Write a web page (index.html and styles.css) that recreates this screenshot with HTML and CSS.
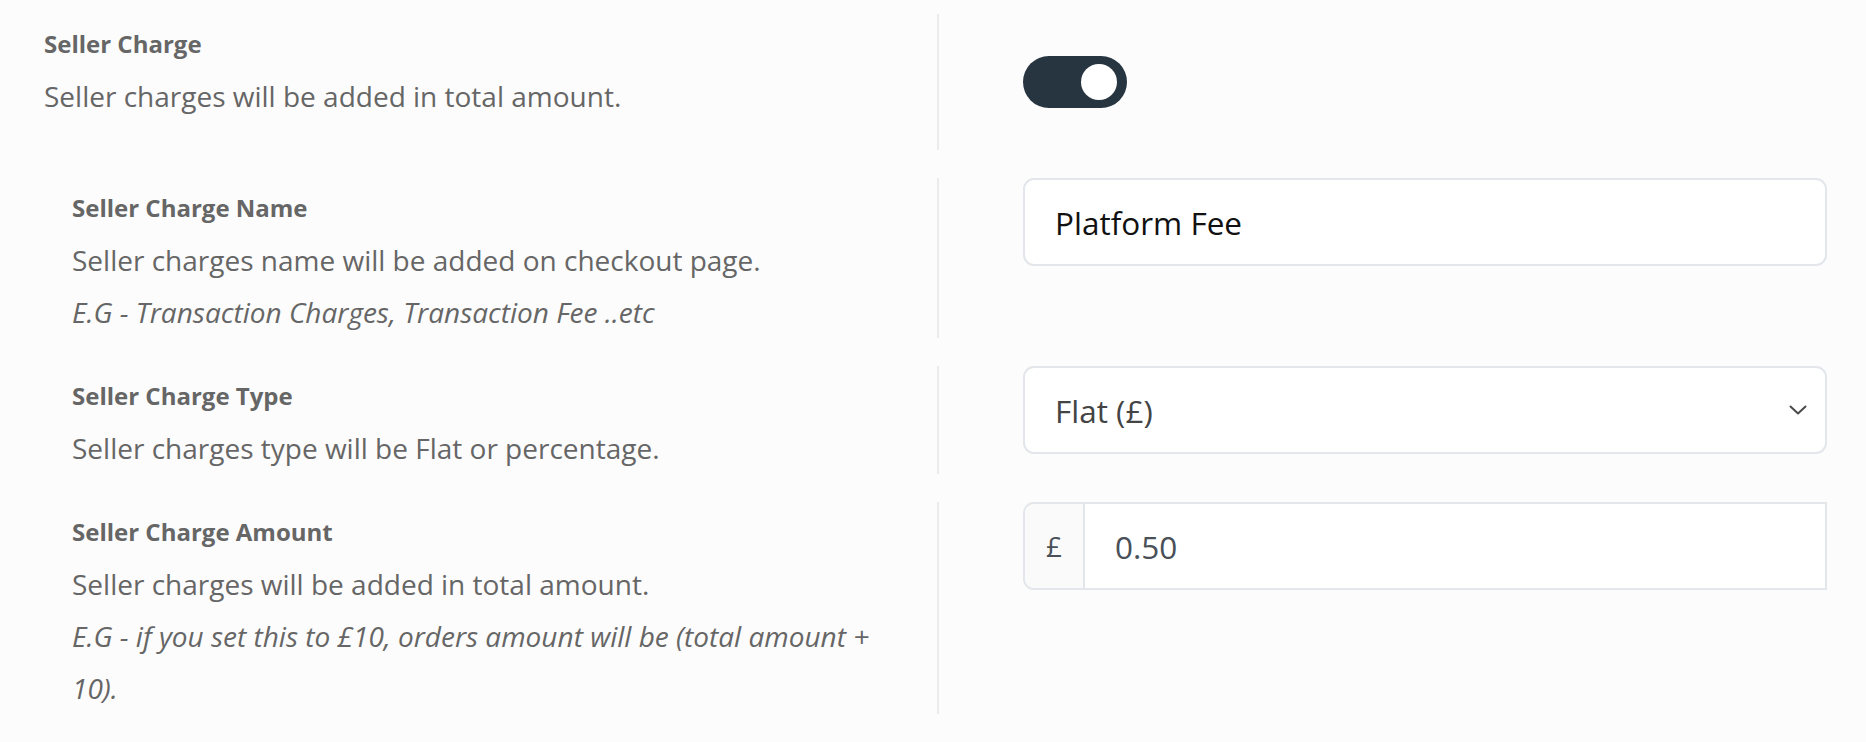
FILE: index.html
```html
<!DOCTYPE html>
<html lang="en">
<head>
<meta charset="utf-8">
<title>Seller Charge Settings</title>
<link rel="stylesheet" href="styles.css">
</head>
<body>
<div class="settings">
  <div class="row row-main">
    <div class="info">
      <div class="label">Seller Charge</div>
      <div class="desc">Seller charges will be added in total amount.</div>
    </div>
    <div class="control control-center">
      <label class="toggle">
        <input type="checkbox" checked>
        <span class="track"><span class="knob"></span></span>
      </label>
    </div>
  </div>

  <div class="row">
    <div class="info info-sub">
      <div class="label">Seller Charge Name</div>
      <div class="desc">Seller charges name will be added on checkout page.</div>
      <div class="desc hint">E.G - Transaction Charges, Transaction Fee ..etc</div>
    </div>
    <div class="control">
      <input class="field field-dark" type="text" value="Platform Fee">
    </div>
  </div>

  <div class="row">
    <div class="info info-sub">
      <div class="label">Seller Charge Type</div>
      <div class="desc">Seller charges type will be Flat or percentage.</div>
    </div>
    <div class="control">
      <div class="select-wrap">
        <select class="field field-select">
          <option>Flat (£)</option>
          <option>Percentage (%)</option>
        </select>
        <svg class="chevron" width="18" height="10" viewBox="0 0 18 10" aria-hidden="true"><path d="M1.5 1.5 L9 8.5 L16.5 1.5" fill="none" stroke="#4a4a4a" stroke-width="2" stroke-linecap="round" stroke-linejoin="round"/></svg>
      </div>
    </div>
  </div>

  <div class="row">
    <div class="info info-sub">
      <div class="label">Seller Charge Amount</div>
      <div class="desc">Seller charges will be added in total amount.</div>
      <div class="desc hint">E.G - if you set this to £10, orders amount will be (total amount + 10).</div>
    </div>
    <div class="control">
      <div class="input-group">
        <span class="prefix">£</span>
        <input class="group-field" type="text" value="0.50">
      </div>
    </div>
  </div>
</div>
</body>
</html>
```

FILE: styles.css
```css
html, body {
  margin: 0;
  padding: 0;
  background: #fcfcfc;
}

body {
  font-family: "Open Sans", "Noto Sans", sans-serif;
  color: #666;
}

.settings {
  display: flex;
  flex-direction: column;
  gap: 28px;
  padding-top: 14px;
}

.row {
  display: flex;
}

.info {
  width: 937px;
  flex: none;
  box-sizing: border-box;
  padding: 4px 40px 0 44px;
}

.row-main .info {
  padding-bottom: 28px;
}

.info-sub {
  padding-left: 72px;
}

.label {
  font-size: 24px;
  font-weight: 700;
  line-height: 52px;
  color: #666;
}

.desc {
  font-size: 28px;
  line-height: 52px;
  color: #666;
}

.hint {
  font-style: italic;
}

.control {
  flex: 1;
  border-left: 2px solid #ebebeb;
  padding: 0 39px 0 84px;
}

.control-center {
  display: flex;
  align-items: center;
}

/* toggle */
.toggle {
  display: inline-block;
  cursor: pointer;
}

.toggle input {
  display: none;
}

.track {
  display: flex;
  align-items: center;
  justify-content: flex-end;
  width: 104px;
  height: 52px;
  box-sizing: border-box;
  padding: 0 10px;
  border-radius: 26px;
  background: #273541;
}

.knob {
  width: 36px;
  height: 36px;
  border-radius: 50%;
  background: #fff;
}

/* fields */
.field {
  display: block;
  width: 100%;
  height: 88px;
  box-sizing: border-box;
  margin: 0;
  padding: 0 30px;
  border: 2px solid #e3e6ea;
  border-radius: 11px;
  background: #fff;
  font-family: "Open Sans", "Noto Sans", sans-serif;
  font-size: 31.5px;
  outline: none;
}

.field-dark {
  color: #111;
}

.select-wrap {
  position: relative;
}

.field-select {
  -webkit-appearance: none;
  appearance: none;
  color: #444;
}

.chevron {
  position: absolute;
  right: 20px;
  top: 39px;
  pointer-events: none;
}

.input-group {
  display: flex;
  height: 88px;
  box-sizing: border-box;
  border: 2px solid #e3e6ea;
  border-radius: 11px 0 0 11px;
  background: #fff;
  overflow: hidden;
}

.prefix {
  display: flex;
  align-items: center;
  justify-content: center;
  width: 58px;
  flex: none;
  border-right: 2px solid #e3e6ea;
  background: #fafafa;
  font-size: 28px;
  color: #495057;
}

.group-field {
  flex: 1;
  min-width: 0;
  border: 0;
  padding: 0 30px;
  background: #fff;
  font-family: "Open Sans", "Noto Sans", sans-serif;
  font-size: 31.5px;
  color: #495057;
  outline: none;
}
```
